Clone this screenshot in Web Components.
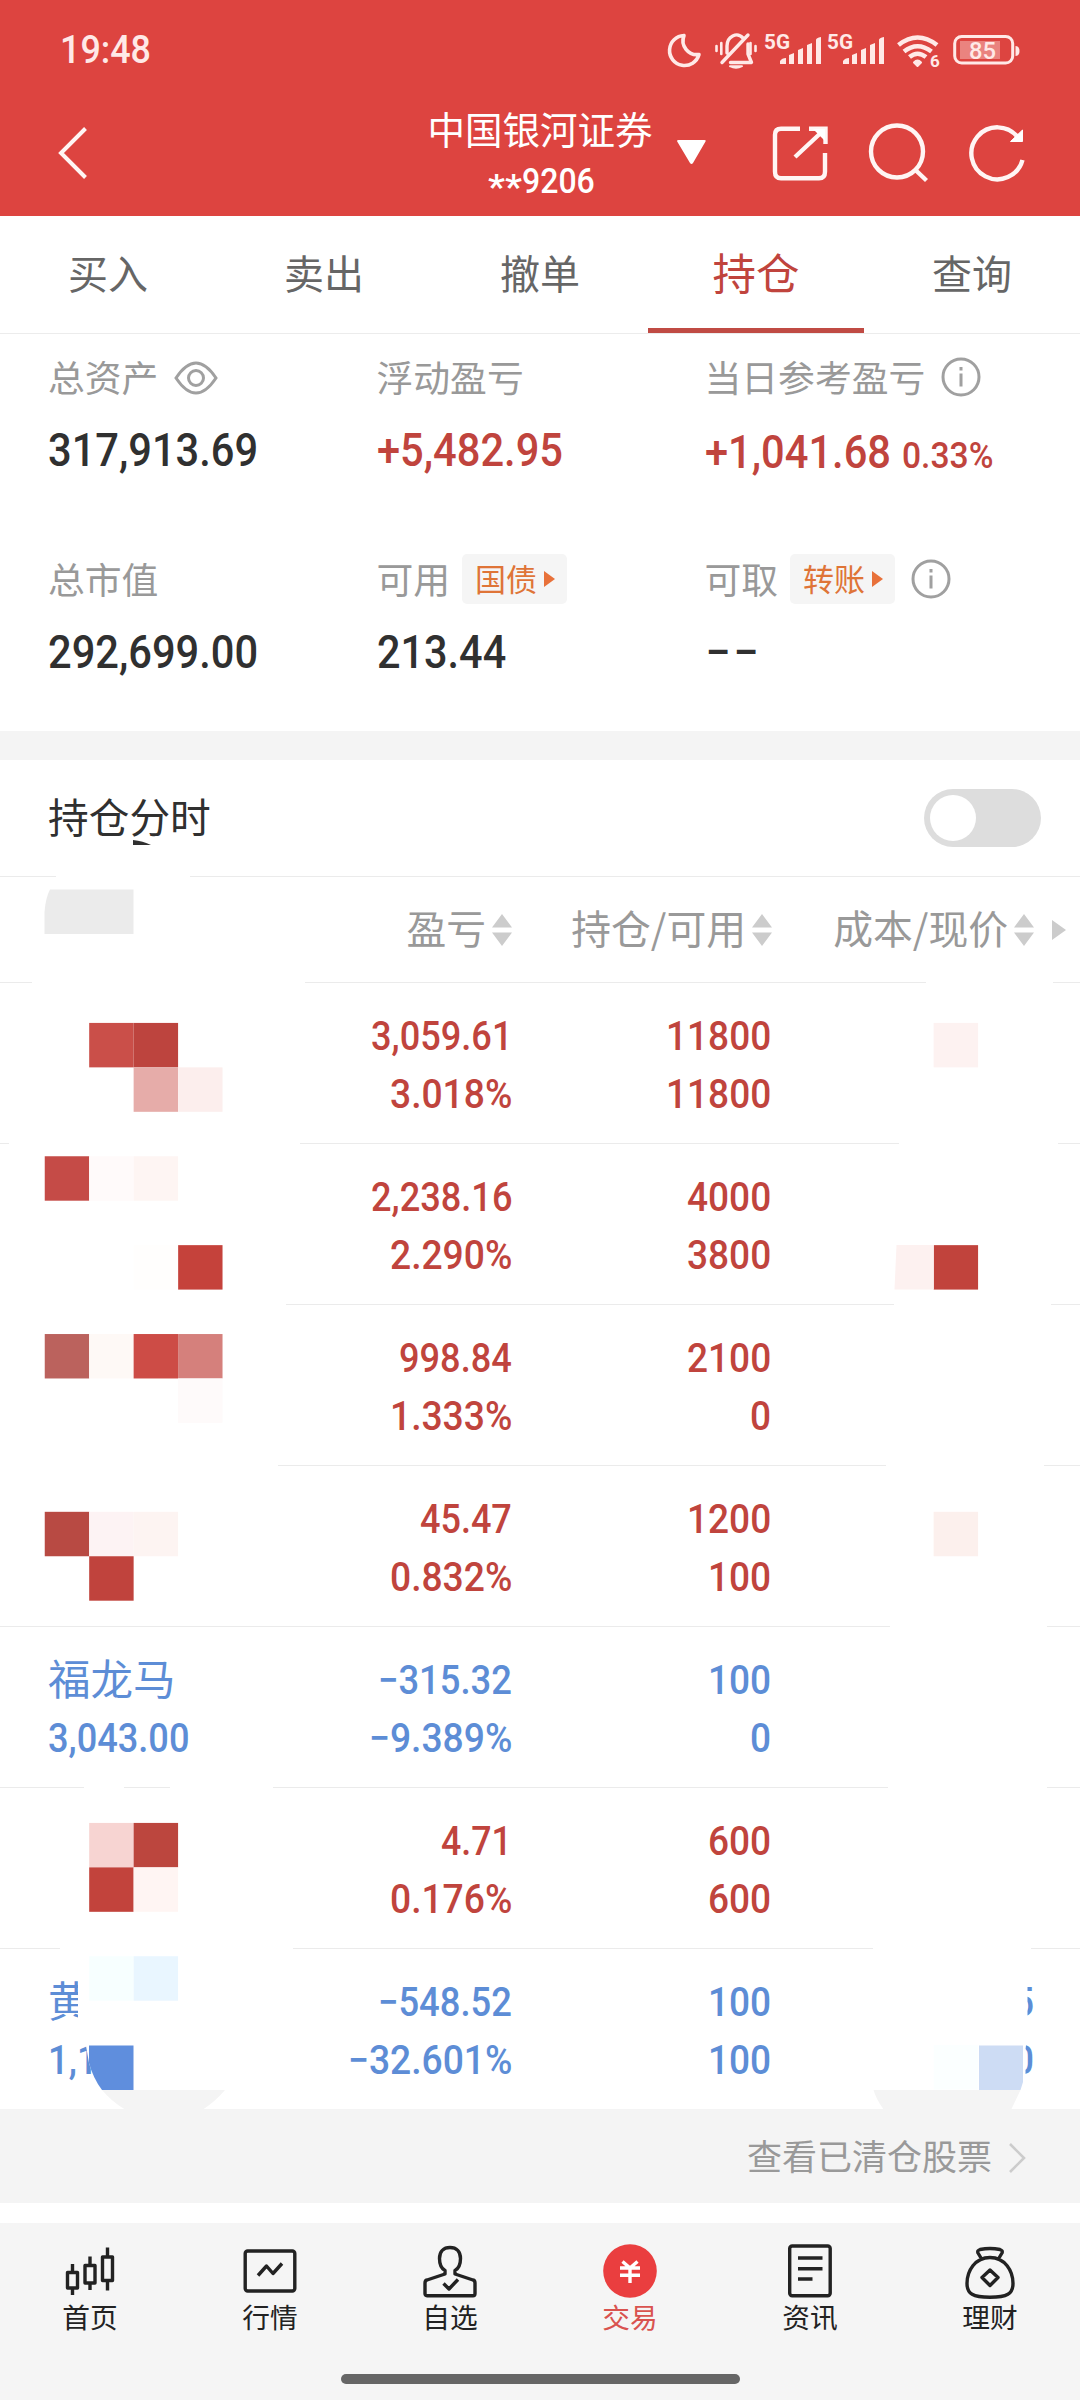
<!DOCTYPE html>
<html lang="zh-CN">
<head>
<meta charset="utf-8">
<title>持仓</title>
<style>
body { margin: 0; background: #fff; font-family: "Noto Sans CJK SC", sans-serif; }
</style>
</head>
<body>
<trade-page></trade-page>
<script>
const define = (name, html, init) => {
  const tpl = document.createElement('template');
  tpl.innerHTML = html;
  customElements.define(name, class extends HTMLElement {
    connectedCallback() {
      if (this.shadowRoot) return;
      this.attachShadow({ mode: 'open' }).append(document.importNode(tpl.content, true));
      if (init) init.call(this, this.shadowRoot);
    }
  });
};

/* Condensed numerals: "u" is the advance of one digit, "w" a fixed width. */
define('num-text', `
<style>
:host { display: inline-block; white-space: nowrap; font-family: Roboto, sans-serif; font-weight: 500; }
span { display: inline-block; transform-origin: 0 50%; }
</style><span><slot></slot></span>`, function (root) {
  const u = +this.getAttribute('u');
  let w = +this.getAttribute('w');
  if (!w) for (const c of this.textContent) w += u * (c === '.' || c === ',' ? .36 : c === '%' ? 1.45 : 1);
  const span = root.querySelector('span');
  this.style.width = w + 'px';
  span.style.transform = `scaleX(${w / span.getBoundingClientRect().width})`;
});

define('status-bar', `
<style>
:host { display: flex; justify-content: space-between; height: 80px; padding: 20px 50px 0 60px; box-sizing: border-box; color: #ffe9e7; }
num-text { font-size: 38px; line-height: 61px; }
svg { display: block; }
text { font-family: Roboto, sans-serif; font-weight: 700; fill: #ffe9e7; }
</style>
<num-text w="91">19:48</num-text>
<svg width="370" height="60" viewBox="660 20 370 60" fill="none" stroke="#ffe9e7" stroke-width="3.6" stroke-linecap="round" stroke-linejoin="round">
  <path d="M684 35.5A15 15 0 1 0 699 54.5A14 14 0 0 1 684 35.5Z"/>
  <path d="M727 53V46a9.500 11 0 0 1 16-8M748 44v10l3.500 8.500H730.500M722 62.500L748 35" stroke-width="3.400"/>
  <path d="M730 66.200h12q-6 3-12 0" stroke-width="2"/>
  <path d="M716.500 46v5M721.300 43v11M750.500 43v11M755.500 46v5" stroke-width="2.600"/>
  <g fill="#ffe9e7" stroke="none">
    <path id="bars" d="M780 64v-3q2-3 6-3v6ZM789 64V55l5-2v11ZM798 64V50l5-2v16ZM807 64V45l5-2v21ZM816 64V40q0-2 5-3v27Z"/>
    <use href="#bars" x="63"/>
    <path d="M1015.500 46q4 0 4 5t-4 5Z"/>
    <rect x="960" y="41" width="40" height="18" fill-opacity=".38"/>
    <text x="764" y="49" font-size="21" textLength="26" lengthAdjust="spacingAndGlyphs">5G</text>
    <text x="827" y="49" font-size="21" textLength="26" lengthAdjust="spacingAndGlyphs">5G</text>
    <text x="930" y="66.500" font-size="17">6</text>
    <text x="969" y="58.800" font-size="23.500" textLength="27" lengthAdjust="spacingAndGlyphs" style="font-weight:500">85</text>
    <path d="M917.500 66l-3.500-3.500q3.500-4 7 0Z" stroke="#ffe9e7" stroke-width="2"/>
  </g>
  <path d="M898.500 45q19-15 38.500 0M904 51.500q13.500-10.500 27.500 0M909.500 57q8-6.500 16.500 0" stroke-width="4.600" stroke-linecap="butt"/>
  <rect x="954.700" y="36.500" width="58" height="26.500" rx="7" stroke-width="3"/>
</svg>`);

define('title-bar', `
<style>
:host { display: grid; grid-template-columns: 420px 240px 1fr; height: 136px; align-items: start; color: #fff; }
svg { display: block; fill: none; stroke: #fff5f4; stroke-width: 4.400; }
.back { padding: 41px 0 0 54px; }
.title { text-align: center; padding-top: 23px; }
.name { font-size: 37.500px; line-height: 50px; font-weight: 400; }
.acct { display: flex; justify-content: center; gap: 2px; font-size: 35px; line-height: 50px; margin: 4px 0 0 1px; }
.stars { margin-top: 6px; }
.actions { padding-top: 38px; }
</style>
<div class="back"><svg width="40" height="60" viewBox="54 121 40 60"><path d="M85.500 128.500L61 153l24.500 24.500" stroke-width="4"/></svg></div>
<div class="title">
  <div class="name">中国银河证券</div>
  <div class="acct"><num-text class="stars" w="34">**</num-text><num-text u="18.200">9206</num-text></div>
</div>
<svg class="actions" width="375" height="70" viewBox="660 118 375 70">
  <path d="M677 141q0-1 1.500-1h26q2 0 1 1.500L693 163q-1.500 2-3 0L677.500 142Z" fill="#fff" stroke="none"/>
  <path d="M800 128.800H781q-6 0-6 6v37q0 6.500 6 6.500h38q6 0 6-6.500V153M795 157L825 129M809 128.800h16.500V144"/>
  <path d="M813 129h12v12Z" fill="#fff" stroke="none"/>
  <ellipse cx="897" cy="151.500" rx="26" ry="26"/><path d="M916 170.500l10.500 10"/>
  <path d="M1018 137.500A26 26 0 1 0 1022.500 160"/>
  <path d="M1022.500 130v11.500h-12Z" fill="#fff" stroke="#fff" stroke-width="1"/>
</svg>`);

define('tab-item', `
<style>
:host { flex: 1; display: flex; justify-content: center; height: 117px; box-sizing: border-box; color: #666; font-size: 40px; line-height: 112px; border-bottom: 5px solid transparent; }
:host([active]) { color: #c0443d; font-size: 43.500px; border-bottom-color: #c04b44; }
</style><slot></slot>`);
define('tab-strip', `
<style>:host { display: flex; height: 117px; border-bottom: 1px solid #ececec; }</style>
<tab-item>买入</tab-item><tab-item>卖出</tab-item><tab-item>撤单</tab-item><tab-item active>持仓</tab-item><tab-item>查询</tab-item>`);

define('info-icon', `
<style>:host { display: block; } svg { display: block; fill: none; stroke: #a0a0a0; stroke-width: 3; }</style>
<svg width="40" height="40" viewBox="0 0 40 40"><circle cx="20" cy="20" r="18"/><path d="M20 16.500v13M20 10v3.500"/></svg>`);
define('link-pill', `
<style>
:host { display: flex; align-items: center; gap: 7px; box-sizing: border-box; width: 105px; height: 50px; padding-left: 13px; border-radius: 5px; background: #f5f5f5; color: #df7437; font-size: 31px; line-height: 44px; margin-left: 12px; }
i { border-left: 11px solid #e8713a; border-top: 8px solid transparent; border-bottom: 8px solid transparent; }
span { margin-top: -3px; }
</style><span><slot></slot></span><i></i>`);
define('asset-cell', `
<style>
:host { display: block; color: #303030; font-size: 47px; }
:host([up]) { color: #c0443d; }
.label { display: flex; align-items: center; height: 50px; color: #999; font-size: 36.800px; line-height: 50px; }
.value { display: flex; align-items: baseline; height: 60px; line-height: 60px; margin-top: 18px; }
</style>
<div class="label"><slot name="label"></slot></div>
<div class="value"><slot></slot></div>`);
define('asset-summary', `
<style>
:host { display: grid; grid-template-columns: 328.500px 328px 1fr; grid-template-rows: 202px 195px; height: 397px; box-sizing: border-box; padding: 18px 0 0 48px; }
asset-cell > [slot] { display: flex; align-items: center; }
asset-cell > [slot] > span { position: relative; top: -1px; }
.eye { margin: 2px 0 0 16px; fill: none; stroke: #a0a0a0; stroke-width: 3; }
info-icon { margin-left: 16px; }
.pct { font-size: 36px; margin-left: 11px; }
.late { padding-top: 2px; }
.dash + .dash { margin-left: 4px; }
.dash:first-of-type { margin-left: 1px; }
</style>
<asset-cell><div slot="label"><span>总资产</span><svg class="eye" width="44" height="36" viewBox="0 0 44 36"><path d="M2 18Q22-12 42 18Q22 48 2 18Z"/><circle cx="22" cy="18" r="7.500"/></svg></div><num-text u="24.100">317,913.69</num-text></asset-cell>
<asset-cell up><div slot="label"><span>浮动盈亏</span></div><num-text u="24.100">+5,482.95</num-text></asset-cell>
<asset-cell up><div slot="label"><span>当日参考盈亏</span><info-icon></info-icon></div><num-text class="late" u="24.100">+1,041.68</num-text><num-text class="pct" u="19">0.33%</num-text></asset-cell>
<asset-cell><div slot="label"><span>总市值</span></div><num-text u="24.100">292,699.00</num-text></asset-cell>
<asset-cell><div slot="label"><span>可用</span><link-pill>国债</link-pill></div><num-text u="24.100">213.44</num-text></asset-cell>
<asset-cell><div slot="label"><span>可取</span><link-pill>转账</link-pill><info-icon></info-icon></div><num-text class="dash" w="24">–</num-text><num-text class="dash" w="24">–</num-text></asset-cell>`);

define('toggle-switch', `
<style>
:host { display: flex; align-items: center; width: 117px; height: 58px; box-sizing: border-box; padding-left: 6px; border-radius: 29px; background: #ddd; }
i { width: 46px; height: 46px; border-radius: 50%; background: #fff; }
</style><i></i>`);
define('sort-label', `
<style>
:host { display: flex; align-items: center; justify-content: flex-end; gap: 6px; color: #999; font-size: 39.800px; line-height: 60px; white-space: nowrap; }
svg { display: block; fill: #ccc; margin-top: 0; }
span { position: relative; top: -3px; }
</style><span><slot></slot></span>
<svg width="20" height="32" viewBox="0 0 20 32"><path d="M10 0l10 13.500H0ZM10 32L0 18.500h20Z"/></svg>`);

define('holding-row', `
<style>
:host { display: grid; grid-template-columns: 260px 252px 259px 263px; height: 161px; box-sizing: border-box; border-bottom: 1px solid #ebebeb; padding-top: 24px; font-size: 40.500px; line-height: 58px; color: #c0443d; }
:host([down]) { color: #5d8dd6; }
:host([last]) { height: 160px; border-bottom: none; }
div { display: flex; flex-direction: column; align-items: flex-end; }
div:first-of-type { align-items: flex-start; padding-left: 48px; }
.name { font-size: 42.500px; height: 58px; line-height: 52px; }
</style>
<div></div><div></div><div></div><div></div>`, function (root) {
  const cols = root.querySelectorAll('div');
  (this.getAttribute('values') || '').split('|').forEach((pair, i) => {
    if (!pair) return;
    pair.split(' ').forEach((value, j) => {
      const isName = i === 0 && j === 0;
      const el = document.createElement(isName ? 'span' : 'num-text');
      if (isName) el.className = 'name';
      else el.setAttribute('u', '21.05');
      el.textContent = value;
      cols[i].append(el);
    });
  });
});

/* Privacy mosaic: cells of a 44.44px grid, given as [column, row, colour]. */
define('privacy-mosaic', `
<style>:host { display: block; position: absolute; inset: 0; pointer-events: none; } svg { display: block; }</style>
<svg width="1080" height="1349" viewBox="0 760 1080 1349"></svg>`, function (root) {
  const s = 400 / 9;
  const gaps = [[56, 190, 876], [32, 305, 982], [926, 1053, 982], [9, 300, 1143], [899, 1058, 1143], [0, 286, 1304], [894, 1051, 1304], [0, 278, 1465], [886, 1044, 1465], [890, 1047, 1626], [84, 124, 1787], [170, 273, 1787], [888, 1047, 1787], [60, 293, 1948], [873, 1031, 1948]];
  const cells = [[2,23,'#ca4f49'],[3,23,'#bd443e'],[3,24,'#e6aca9'],[4,24,'#fceeed'],[1,26,'#c54b47'],[2,26,'#fffafa'],[3,26,'#fef5f3'],[4,28,'#c5423b'],[3,28,'#fffefd'],[21,23,'#fdf2f1'],[21,28,'#c1433c'],[1,30,'#bb625d'],[2,30,'#fef9f6'],[3,30,'#cd4c46'],[4,30,'#d5807c'],[4,31,'#fefafa'],[1,34,'#b84a43'],[2,34,'#fdf3f4'],[3,34,'#fdf4f2'],[2,35,'#c0433d'],[21,34,'#fcf0ed'],[2,41,'#f7d4d2'],[3,41,'#bc463e'],[2,42,'#c2433c'],[3,42,'#fff5f3'],[2,44,'#f7ffff'],[3,44,'#e9f6ff'],[21,46,'#fbffff']];
  let out = gaps.map(([a, b, y]) => `<rect x="${a}" y="${y - 1}" width="${b - a}" height="3" fill="#fff"/>`).join('');
  out += '<path d="M133 840v5h18q-8-4-18-5Z" fill="#303030"/><path d="M50 889.500h83.500v44.500h-89V912q1-14 5.500-22.500Z" fill="#ebebeb"/>';
  out += '<path d="M78 1950H200V2089H102Q93 2078 89 2063L85 2040Q79 2032 78 2020Z" fill="#fff"/><path d="M980 1960h47.500v70l-2 20v30L1010 2100h-30Z" fill="#fff"/>';
  out += cells.map(([c, r, f]) => `<rect x="${c * s + .3}" y="${r * s + .7}" width="${s}" height="${s}" fill="${f}"/>`).join('');
  out += '<path d="M896.500 1245h37.300V1289.600H894.500Z" fill="#fdf1f0"/>';
  out += '<path d="M89 2045.500h44.500V2090H102Q93 2078 89 2063Z" fill="#5f8edd"/><path d="M979 2045.500h44V2082l-2.500 8H979Z" fill="#cddcf4"/>';
  out += '<path d="M102 2090H225Q215 2102 202 2110H126Q112 2102 102 2090ZM873.500 2090H1020.500L1011 2110H884Q876 2099 873.500 2090Z" fill="#f4f4f4"/>';
  root.querySelector('svg').innerHTML = out;
});

define('holdings-panel', `
<style>
:host { display: block; position: relative; height: 1349px; }
.bar { display: flex; justify-content: space-between; align-items: center; height: 117px; box-sizing: border-box; padding: 0 39px 0 48px; border-bottom: 1px solid #ebebeb; color: #303030; font-size: 40.700px; line-height: 60px; }
.bar span { margin-top: -5px; }
.head { display: grid; grid-template-columns: 512px 260px 262px 1fr; align-items: center; height: 106px; box-sizing: border-box; border-bottom: 1px solid #ebebeb; }
.more { margin-left: 18px; width: 0; border-left: 14px solid #ccc; border-top: 10px solid transparent; border-bottom: 10px solid transparent; }
</style>
<div class="bar"><span>持仓分时</span><toggle-switch></toggle-switch></div>
<div class="head"><sort-label>盈亏</sort-label><sort-label>持仓/可用</sort-label><sort-label>成本/现价</sort-label><i class="more"></i></div>
<holding-row values="|3,059.61 3.018%|11800 11800|"></holding-row>
<holding-row values="|2,238.16 2.290%|4000 3800|"></holding-row>
<holding-row values="|998.84 1.333%|2100 0|"></holding-row>
<holding-row values="|45.47 0.832%|1200 100|"></holding-row>
<holding-row down values="福龙马 3,043.00|−315.32 −9.389%|100 0|"></holding-row>
<holding-row values="|4.71 0.176%|600 600|"></holding-row>
<holding-row down last values="黄 1,1|−548.52 −32.601%|100 100|5 0"></holding-row>
<privacy-mosaic></privacy-mosaic>`);

define('cleared-link', `
<style>
:host { display: flex; justify-content: flex-end; align-items: center; gap: 16px; height: 94px; box-sizing: border-box; padding-right: 54px; background: #f4f4f4; color: #999; font-size: 35px; line-height: 60px; }
span { margin-top: -3px; }
svg { fill: none; stroke: #ccc; stroke-width: 2.600; margin-top: 3px; }
</style><span>查看已清仓股票</span>
<svg width="18" height="30" viewBox="0 0 18 30"><path d="M2 1l14 14L2 29"/></svg>`);

define('nav-item', `
<style>
:host { flex: 1; display: flex; flex-direction: column; align-items: center; color: #222; font-size: 27.700px; line-height: 40px; padding-top: 17px; }
:host([active]) { color: #d9534f; }
.label { margin-top: -4px; }
</style><slot name="icon"></slot><span class="label"><slot></slot></span>`);
define('bottom-nav', `
<style>
:host { display: block; height: 177px; background: #f5f5f5; }
.items { display: flex; height: 151px; }
svg { display: block; fill: none; stroke: #222; stroke-width: 3.400; stroke-linejoin: round; }
.home { width: 399px; height: 10px; border-radius: 5px; background: #666; margin: 0 auto; }
</style>
<div class="items">
<nav-item><svg slot="icon" width="60" height="60" viewBox="0 0 60 60"><path d="M7.500 32.500h10v15.500h-10ZM25 25.500h10V43H25ZM42.500 17h10v23.500h-10ZM12.500 24v8M12.500 48v7M30 16.500V25M30 43v7M47.500 7.500V17M47.500 41v9.500"/></svg>首页</nav-item>
<nav-item><svg slot="icon" width="60" height="60" viewBox="0 0 60 60"><rect x="5.200" y="11" width="49.600" height="40" rx="2.500"/><path d="M18 35.500l8.500-9.500 6.500 7.500L42 23.500"/></svg>行情</nav-item>
<nav-item><svg slot="icon" width="60" height="60" viewBox="0 0 60 60"><path d="M25 30.500C20.500 28 19.500 24 19.500 18.500C19.500 11.500 23.500 7.500 30 7.500S40.500 11.500 40.500 18.500C40.500 24 39.500 28 35 30.500V34L53 40Q55 40.500 55 43V53.500Q55 55.800 53 55.800H7Q5 55.800 5 53.500V43Q5 40.500 7 40L25 34ZM23.500 43.500l5.500 5.500 9-9.500"/></svg>自选</nav-item>
<nav-item active><svg slot="icon" width="60" height="60" viewBox="0 0 60 60"><circle cx="30" cy="31" r="26.800" fill="#ea3e3f" stroke="none"/><path d="M22.500 21.500L30 28l7.500-6.500M20 28h20M20 35.200h20M30 28v15" stroke="#fff" stroke-linejoin="miter"/></svg>交易</nav-item>
<nav-item><svg slot="icon" width="60" height="60" viewBox="0 0 60 60"><rect x="9.700" y="6" width="40.500" height="49.700" rx="2.500"/><path d="M18 18h24.500M18 28.700h24.500M18 39h14.500"/></svg>资讯</nav-item>
<nav-item><svg slot="icon" width="60" height="60" viewBox="0 0 60 60"><path d="M21 18L18 13Q17 10.500 20 9.500Q30 7.500 40 9.500Q43 10.500 42 13L39 18M30 17.500C15 17.500 7 31 7 43.500C7 54 13 57.300 30 57.300S53 54 53 43.500C53 31 45 17.500 30 17.500ZM30 30l8 7.500-8 8-8-8Z"/></svg>理财</nav-item>
</div>
<div class="home"></div>`);

define('trade-page', `
<style>
:host { display: block; width: 1080px; height: 2400px; overflow: hidden; background: #fff; }
header { background: #dd4440; height: 216px; }
.band { height: 29px; background: #f4f4f4; }
.space { height: 20px; }
</style>
<header><status-bar></status-bar><title-bar></title-bar></header>
<tab-strip></tab-strip>
<asset-summary></asset-summary>
<div class="band"></div>
<holdings-panel></holdings-panel>
<cleared-link></cleared-link>
<div class="space"></div>
<bottom-nav></bottom-nav>`);
</script>
</body>
</html>
